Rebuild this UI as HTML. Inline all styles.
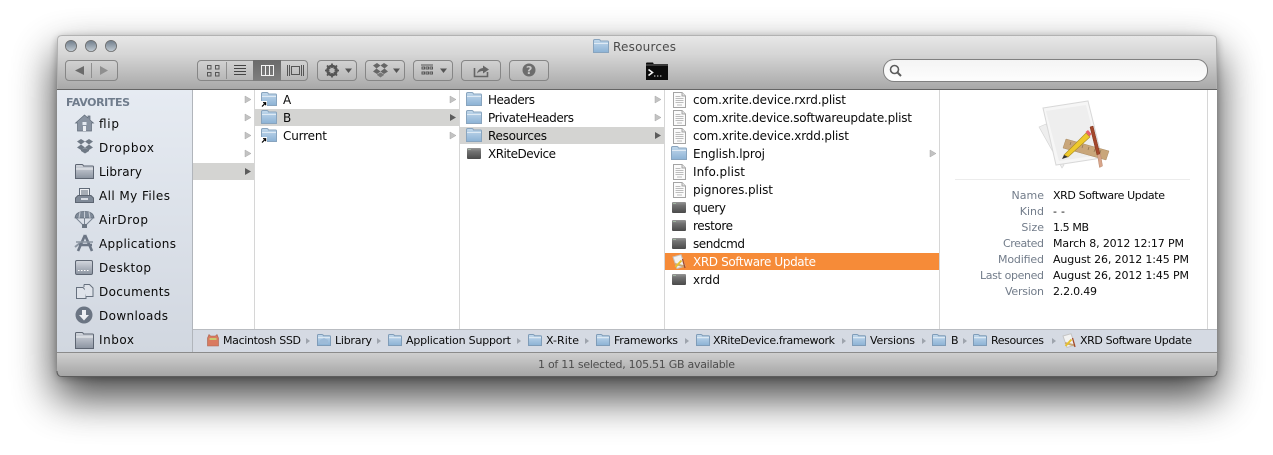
<!DOCTYPE html>
<html><head><meta charset="utf-8"><title>Resources</title>
<style>
html,body{margin:0;padding:0;width:1273px;height:455px;overflow:hidden;background:#fff}
svg{display:block}
text{font-family:"DejaVu Sans","Liberation Sans",sans-serif;font-size:12px;fill:#0a0a0a}
.s{font-size:11px}
.l{font-size:11px;fill:#727c8a}
</style></head><body>
<svg width="1273" height="455" viewBox="0 0 1273 455" xmlns="http://www.w3.org/2000/svg">
<defs>
<filter id="sh" x="-10%" y="-30%" width="120%" height="170%"><feGaussianBlur stdDeviation="21"/></filter>
<filter id="sh2" x="-5%" y="-10%" width="110%" height="120%"><feGaussianBlur stdDeviation="4"/></filter>
<linearGradient id="tb" x1="0" y1="0" x2="0" y2="1"><stop offset="0" stop-color="#e8e8e8"/><stop offset=".35" stop-color="#d6d6d6"/><stop offset="1" stop-color="#a7a7a7"/></linearGradient>
<linearGradient id="st" x1="0" y1="0" x2="0" y2="1"><stop offset="0" stop-color="#cfcfcf"/><stop offset="1" stop-color="#a5a5a5"/></linearGradient>
<linearGradient id="sb" x1="0" y1="0" x2="0" y2="1"><stop offset="0" stop-color="#e6ebf2"/><stop offset="1" stop-color="#d1d7e0"/></linearGradient>
<linearGradient id="btn" x1="0" y1="0" x2="0" y2="1"><stop offset="0" stop-color="#d2d2d2"/><stop offset="1" stop-color="#b6b6b6"/></linearGradient>
<linearGradient id="sel" x1="0" y1="0" x2="0" y2="1"><stop offset="0" stop-color="#6a6a6a"/><stop offset="1" stop-color="#7e7e7e"/></linearGradient>
<linearGradient id="fo" x1="0" y1="0" x2="0" y2="1"><stop offset="0" stop-color="#c3d9ec"/><stop offset="1" stop-color="#8cb2d5"/></linearGradient>
<linearGradient id="gf" x1="0" y1="0" x2="0" y2="1"><stop offset="0" stop-color="#d4d8df"/><stop offset="1" stop-color="#8b93a0"/></linearGradient>
<linearGradient id="ex" x1="0" y1="0" x2="0" y2="1"><stop offset="0" stop-color="#969696"/><stop offset=".3" stop-color="#737373"/><stop offset="1" stop-color="#4a4a4a"/></linearGradient>
<linearGradient id="tl" x1="0" y1="0" x2="0" y2="1"><stop offset="0" stop-color="#6e7c8a"/><stop offset="1" stop-color="#c3ccd4"/></linearGradient>
<linearGradient id="sr" x1="0" y1="0" x2="0" y2="1"><stop offset="0" stop-color="#f4f4f4"/><stop offset="1" stop-color="#fdfdfd"/></linearGradient>

<g id="f"><path d="M.5 13.5V1.8Q.5.5 1.8.5H6Q7 .5 7.5 2H14.5Q15.5 2 15.5 3V13.5Z" fill="url(#fo)" stroke="#88a4be"/><path d="M1 4.5H15" stroke="#dfeaf4"/></g>
<g id="fs"><path d="M.5 11.5V1.6Q.5.5 1.5.5H5Q6 .5 6.5 1.7H12.5Q13.5 1.7 13.5 2.7V11.5Z" fill="url(#fo)" stroke="#7f9cb8"/><path d="M1 3.7H13" stroke="#e4eef6"/></g>
<g id="al"><rect x="0" y="0" width="6" height="6" fill="#fff"/><path d="M1 5.500L4.200 2.300M2 1.700H4.600V4.300" stroke="#000" stroke-width="1.200" fill="none"/></g>
<g id="d"><path d="M.5.5H9L12.5 4V15.5H.5Z" fill="#fbfbfb" stroke="#a4a4a4"/><path d="M9 .5V4H12.5" fill="#e4e4e4" stroke="#a4a4a4"/><path d="M2.500 4.500H7.500M2.500 6.500H10.500M2.500 8.500H10.500M2.500 10.500H10.500M4 13H9" stroke="#bcbcbc"/></g>
<g id="e"><rect x="0" y="0" width="14" height="11" rx="1" fill="url(#ex)"/><rect x="1" y="1" width="3" height="1" fill="#9fb49f"/></g>
<g id="app"><path d="M1 3L9 .7 13 12 5 14.500Z" fill="#f2f2f2" stroke="#c4c4c4"/><path d="M3 10L13 12.500" stroke="#c9a878" stroke-width="2"/><path d="M3.500 13L9.500 6.500" stroke="#e7c22e" stroke-width="2"/><path d="M10.500 5L13 14" stroke="#a3492a" stroke-width="1.300"/></g>
<path id="a" d="M0 0L6 3.500L0 7Z" fill="#c3c3c3" stroke="#a9a9a9" stroke-width=".5"/>
<path id="ad" d="M0 0L6 3.500L0 7Z" fill="#5c5c5c"/>
<path id="p" d="M0 0L4 3L0 6Z" fill="#9ea4ad"/>
</defs>

<!-- shadow -->
<rect x="55" y="54" width="1164" height="344" rx="8" fill="#000" opacity=".72" filter="url(#sh)"/>
<rect x="57" y="37" width="1160" height="341" rx="6" fill="#000" opacity=".28" filter="url(#sh2)"/>

<!-- window -->
<rect x="57" y="35" width="1160" height="342" rx="5" fill="#fff"/>
<path d="M57 90V40Q57 35 62 35H1212Q1217 35 1217 40V90Z" fill="url(#tb)"/>
<path d="M57.500 90V40Q57.500 35.500 62 35.500H1212Q1216.500 35.500 1216.500 40V90" fill="none" stroke="#b2b2b2"/>
<rect x="57" y="89" width="1160" height="1" fill="#656565"/>

<!-- sidebar -->
<rect x="57" y="90" width="135" height="262" fill="url(#sb)"/>
<rect x="192" y="90" width="1" height="262" fill="#b1b5bb"/>

<!-- columns -->
<rect x="193" y="163" width="61" height="17" fill="#d4d4d2"/>
<rect x="255" y="109" width="204" height="17" fill="#d4d4d2"/>
<rect x="460" y="127" width="204" height="17" fill="#d4d4d2"/>
<rect x="665" y="253" width="274" height="17" fill="#f68b38"/>
<rect x="254" y="90" width="1" height="240" fill="#d6d6d6"/>
<rect x="459" y="90" width="1" height="240" fill="#d6d6d6"/>
<rect x="664" y="90" width="1" height="240" fill="#d6d6d6"/>
<rect x="939" y="90" width="1" height="240" fill="#d6d6d6"/>
<rect x="1207" y="90" width="1" height="240" fill="#d6d6d6"/>

<!-- path bar -->
<rect x="193" y="330" width="1024" height="22" fill="#d5dae3"/>
<rect x="193" y="329" width="1024" height="1" fill="#b9bcc1"/>
<!-- status -->
<path d="M57 353H1217V371Q1217 376 1212 376H62Q57 376 57 371Z" fill="url(#st)"/>
<rect x="57" y="352" width="1160" height="1" fill="#8b8b8b"/>
<path d="M57 371Q57 376.500 62 376.500H1212Q1217 376.500 1217 371" fill="none" stroke="#5c5c5c"/>

<!-- traffic lights -->
<g stroke="#6d6d6d" stroke-width=".8" fill="url(#tl)"><circle cx="71" cy="46" r="5.600"/><circle cx="91" cy="46" r="5.600"/><circle cx="111" cy="46" r="5.600"/></g>

<!-- title -->
<use href="#f" x="593" y="39"/>
<text x="613" y="51" textLength="63" style="fill:#4a4a4a">Resources</text>

<!-- toolbar buttons -->
<g fill="url(#btn)" stroke="#868686">
<rect x="65.500" y="60.500" width="52" height="20" rx="3.500"/>
<rect x="197.500" y="60.500" width="110" height="20" rx="3.500"/>
<rect x="317.500" y="60.500" width="39" height="20" rx="3.500"/>
<rect x="365.500" y="60.500" width="39" height="20" rx="3.500"/>
<rect x="413.500" y="60.500" width="39" height="20" rx="3.500"/>
<rect x="461.500" y="60.500" width="39" height="20" rx="3.500"/>
<rect x="509.500" y="60.500" width="39" height="20" rx="3.500"/>
</g>
<rect x="253" y="60" width="28" height="21" fill="url(#sel)"/>
<rect x="91" y="63" width="1" height="15" fill="#8f8f8f"/>
<rect x="226" y="62" width="1" height="17" fill="#8f8f8f"/>
<path d="M84 66L75 70.500L84 75Z" fill="#6b6b6b"/>
<path d="M100 66L108 70.500L100 75Z" fill="#8f8f8f"/>
<!-- icon view -->
<g fill="none" stroke="#555"><rect x="207.500" y="65.500" width="3.500" height="3.500"/><rect x="215.500" y="65.500" width="3.500" height="3.500"/><rect x="207.500" y="72.500" width="3.500" height="3.500"/><rect x="215.500" y="72.500" width="3.500" height="3.500"/></g>
<path d="M234 65.500H246M234 68.500H246M234 71.500H246M234 74.500H246" stroke="#444"/>
<g fill="none" stroke="#f3f3f3"><rect x="261.500" y="65.500" width="12" height="10"/><path d="M265.500 65.500V75.500M269.500 65.500V75.500"/></g>
<path d="M287.500 65V76M289.500 65V76M301.500 65V76M303.500 65V76" stroke="#555"/><rect x="291.500" y="66.500" width="8" height="8" fill="none" stroke="#555"/>
<!-- gear -->
<g transform="translate(332 70.500)"><circle r="4.600" fill="none" stroke="#555" stroke-width="2.400"/><path d="M0-7V7M-7 0H7M-5-5L5 5M-5 5L5-5" stroke="#555" stroke-width="1.800"/><circle r="2.600" fill="#bdbdbd"/></g>
<path d="M345 68.500H352L348.500 73Z" fill="#555"/>
<!-- dropbox -->
<path d="M373 65.500L377 63 380.500 65.500 384 63 388 65.500 384.500 68.500 388 71.500 384 74 380.500 71.500 377 74 373 71.500 376.500 68.500 380.500 71.500 384.500 68.500 380.500 65.500 376.500 68.500Z" fill="#666"/>
<path d="M377 75L380.500 77.500 384 75V74.500L380.500 72.500 377 74.500Z" fill="#777"/>
<path d="M393 68.500H400L396.500 73Z" fill="#555"/>
<!-- arrange -->
<path d="M421 65H433" stroke="#555"/><g fill="none" stroke="#555"><rect x="422" y="67" width="2.500" height="2"/><rect x="426" y="67" width="2.500" height="2"/><rect x="430" y="67" width="2.500" height="2"/><rect x="422" y="72" width="2.500" height="2"/><rect x="426" y="72" width="2.500" height="2"/><rect x="430" y="72" width="2.500" height="2"/></g>
<path d="M440 68.500H447L443.500 73Z" fill="#555"/>
<!-- share -->
<path d="M474.500 68V76.500H487.500V72" fill="none" stroke="#666" stroke-width="1.600"/>
<path d="M477 73.500Q478 68.500 483 68V65.500L489 69.500 483 73.500V71Q479.500 71 477 73.500Z" fill="#666"/>
<!-- help -->
<circle cx="529" cy="70" r="6.500" fill="#6d6d6d"/><text x="526" y="74" style="font-size:11px;font-weight:bold;fill:#c9c9c9">?</text>
<!-- terminal -->
<path d="M646 63.500Q646 62.500 647 62.500H653L654 64.500H668V80H646Z" fill="#0c0c0c"/><rect x="646" y="64" width="22" height="2" fill="#3a3a3a"/>
<path d="M648.500 69.500L652.500 72.500 648.500 75.500" fill="none" stroke="#f2f2f2" stroke-width="1.600"/>
<path d="M654 76H655.400M657 76H658.400M660 76H661.400" stroke="#e8e8e8"/>
<!-- search -->
<rect x="883.500" y="59.500" width="324" height="22" rx="10.500" fill="url(#sr)" stroke="#808080"/>
<circle cx="894.500" cy="69.500" r="4" fill="none" stroke="#5d5d5d" stroke-width="1.600"/><path d="M897.500 72.500L901 76" stroke="#5d5d5d" stroke-width="2"/>

<!-- sidebar content -->
<text x="66" y="106" textLength="64" style="font-size:11px;font-weight:bold;fill:#6f7c8c">FAVORITES</text>
<g>
<text x="99" y="128" textLength="20">flip</text>
<text x="99" y="152" textLength="55">Dropbox</text>
<text x="99" y="176" textLength="43">Library</text>
<text x="99" y="200" textLength="71">All My Files</text>
<text x="99" y="224" textLength="49">AirDrop</text>
<text x="99" y="248" textLength="77">Applications</text>
<text x="99" y="272" textLength="52">Desktop</text>
<text x="99" y="296" textLength="71">Documents</text>
<text x="99" y="320" textLength="69">Downloads</text>
<text x="99" y="344" textLength="35">Inbox</text>
</g>
<!-- house -->
<path d="M84.500 115L75.500 123H77.500V131H91.500V123H93.500L90 120V116H88V118Z" fill="#8a94a2" stroke="#5f6a78" stroke-width=".7"/>
<rect x="82.500" y="122" width="4" height="3" fill="#e6ebf2"/><rect x="83" y="126" width="3" height="5" fill="#eef1f5"/>
<!-- dropbox -->
<path d="M77 141.500L81 139 85 141.500 89 139 93 141.500 89 144.500 93 147.500 89 150 85 147.500 81 150 77 147.500 81 144.500 85 147.500 89 144.500 85 141.500 81 144.500Z" fill="#6f7985"/>
<path d="M81 151L85 153.500 89 151V149.800L85 148 81 149.800Z" fill="#6f7985"/>
<!-- library -->
<path d="M75.500 178.500V165.500Q75.500 164.500 76.500 164.500H82Q83 164.500 83.500 166H92.500Q93.500 166 93.500 167V178.500Z" fill="url(#gf)" stroke="#5d6572"/>
<path d="M76 169H93" stroke="#eef0f3"/>
<!-- all my files -->
<rect x="79.500" y="188.500" width="10" height="9" fill="#eef0f4" stroke="#5f6a78"/><path d="M81 191H88M81 193H88M81 195H88" stroke="#5f6a78"/>
<path d="M75.500 198L78 195.500H91L93.500 198V202.500H75.500Z" fill="#7f8997" stroke="#5d6572"/>
<path d="M81 198H88V200H81Z" fill="#d7dce4"/>
<!-- airdrop -->
<path d="M75 218Q75.500 211.500 84.500 211.500T94 218Z" fill="#7f8a98" stroke="#5f6a78" stroke-width=".7"/>
<path d="M80 212L79 218M84.500 211.500V218M89 212L90 218" stroke="#c6ccd5"/>
<path d="M76 218L83 225M93 218L86 225M84.500 218V225" stroke="#7c8694"/><rect x="82" y="224" width="5" height="4" fill="#6c7683"/>
<!-- applications -->
<path d="M75 247L80 243" stroke="#8b95a2" stroke-width="2"/>
<path d="M85 235L78 251M85 235L92 251M79 245H92" stroke="#6c7685" stroke-width="2.600" fill="none"/>
<path d="M76 242H93" stroke="#8b95a2" stroke-width="1.400"/>
<!-- desktop -->
<rect x="75.500" y="260.500" width="17" height="14" rx="1.500" fill="url(#gf)" stroke="#5e6673"/><path d="M78 270.500H90" stroke="#fff" stroke-dasharray="1.500 1.500"/>
<!-- documents -->
<path d="M76.500 287.500H83L86 290.500V298.500H76.500Z" fill="#dfe3ea" stroke="#66707e"/>
<path d="M84 284.500H89.500L93 288V296.500H86" fill="#dfe3ea" stroke="#66707e"/><path d="M84 284.500V287" stroke="#66707e"/>
<!-- downloads -->
<circle cx="84" cy="315" r="8.500" fill="#6b7583"/><path d="M82 310H86V315H89L84 320.500 79 315H82Z" fill="#eef0f3"/>
<!-- inbox -->
<path d="M75.500 348.500V333.500Q75.500 332.500 76.500 332.500H82Q83 332.500 83.500 334H92.500Q93.500 334 93.500 335V348.500Z" fill="url(#gf)" stroke="#5d6572"/>
<path d="M76 337H93" stroke="#eef0f3"/>

<!-- col1 arrows -->
<use href="#a" x="245" y="96"/><use href="#a" x="245" y="114"/><use href="#a" x="245" y="132"/><use href="#a" x="245" y="150"/><use href="#ad" x="245" y="168"/>

<!-- col2 -->
<use href="#f" x="261" y="92"/><use href="#al" x="261" y="101"/>
<use href="#f" x="261" y="110"/>
<use href="#f" x="261" y="128"/><use href="#al" x="261" y="137"/>
<text x="283" y="104" textLength="9">A</text>
<text x="283" y="122" textLength="8">B</text>
<text x="283" y="140" textLength="44">Current</text>
<use href="#a" x="450" y="96"/><use href="#ad" x="450" y="114"/><use href="#a" x="450" y="132"/>

<!-- col3 -->
<use href="#f" x="466" y="92"/><use href="#f" x="466" y="110"/><use href="#f" x="466" y="128"/>
<use href="#e" x="467" y="148"/>
<text x="488" y="104" textLength="47">Headers</text>
<text x="488" y="122" textLength="86">PrivateHeaders</text>
<text x="488" y="140" textLength="59">Resources</text>
<text x="488" y="158" textLength="68">XRiteDevice</text>
<use href="#a" x="655" y="96"/><use href="#a" x="655" y="114"/><use href="#ad" x="655" y="132"/>

<!-- col4 -->
<use href="#d" x="673" y="92"/><use href="#d" x="673" y="110"/><use href="#d" x="673" y="128"/>
<use href="#f" x="671" y="146"/>
<use href="#d" x="673" y="164"/><use href="#d" x="673" y="182"/>
<use href="#e" x="672" y="202"/><use href="#e" x="672" y="220"/><use href="#e" x="672" y="238"/><use href="#e" x="672" y="274"/>
<use href="#app" x="672" y="254"/>
<text x="693" y="104" textLength="153">com.xrite.device.rxrd.plist</text>
<text x="693" y="122" textLength="219">com.xrite.device.softwareupdate.plist</text>
<text x="693" y="140" textLength="156">com.xrite.device.xrdd.plist</text>
<text x="693" y="158" textLength="72">English.lproj</text>
<text x="693" y="176" textLength="52">Info.plist</text>
<text x="693" y="194" textLength="80">pignores.plist</text>
<text x="693" y="212" textLength="33">query</text>
<text x="693" y="230" textLength="40">restore</text>
<text x="693" y="248" textLength="52">sendcmd</text>
<text x="693" y="266" textLength="123" style="fill:#fff">XRD Software Update</text>
<text x="693" y="284" textLength="27">xrdd</text>
<use href="#a" x="930" y="150"/>

<!-- preview -->
<path d="M1039 127L1046 124 1064 165 1062 168Z" fill="#eee" stroke="#d2d2d2" stroke-width=".6"/>
<path d="M1043 108L1088 101 1102 158 1056 165Z" fill="#f6f6f6" stroke="#d8d8d8"/>
<path d="M1046 111L1086 105 1099 155 1059 161Z" fill="#eeeeee"/>
<path d="M1066 139L1109 151 1106 160 1063 148Z" fill="#c9a67a" stroke="#a88a62" stroke-width=".5"/>
<path d="M1070 145L1071 142M1076 147L1077 144M1082 148L1083 145M1088 150L1089 147M1094 152L1095 149M1100 153L1101 150" stroke="#8e7350" stroke-width=".7"/>
<path d="M1064 155L1086 133 1090 137 1068 157Z" fill="#eec92c" stroke="#a88a22" stroke-width=".6"/>
<path d="M1064 155L1068 157 1062 159Z" fill="#333"/>
<path d="M1085.500 132L1088 130 1091.500 134 1089.500 136.500Z" fill="#e8606a"/>
<path d="M1090 127L1093 126 1100 154 1097 155Z" fill="#a3472b" stroke="#7d321c" stroke-width=".5"/>
<path d="M1097.500 155L1100.500 154 1102.500 166 1099.500 167.500Z" fill="#d8a58a" stroke="#b98a6f" stroke-width=".5"/>
<rect x="955" y="179" width="235" height="1" fill="#ececec"/>

<g text-anchor="end">
<text class="l" x="1044" y="199">Name</text>
<text class="l" x="1044" y="215">Kind</text>
<text class="l" x="1044" y="231">Size</text>
<text class="l" x="1044" y="247" textLength="41">Created</text>
<text class="l" x="1044" y="263" textLength="46">Modified</text>
<text class="l" x="1044" y="279" textLength="64">Last opened</text>
<text class="l" x="1044" y="295" textLength="39">Version</text>
</g>
<g>
<text class="s" x="1053" y="199" textLength="112">XRD Software Update</text>
<text class="s" x="1053" y="215" textLength="12">--</text>
<text class="s" x="1053" y="231" textLength="36">1.5 MB</text>
<text class="s" x="1053" y="247" textLength="131">March 8, 2012 12:17 PM</text>
<text class="s" x="1053" y="263" textLength="136">August 26, 2012 1:45 PM</text>
<text class="s" x="1053" y="279" textLength="136">August 26, 2012 1:45 PM</text>
<text class="s" x="1053" y="295" textLength="44">2.2.0.49</text>
</g>

<!-- path bar content -->
<path d="M207.500 346V338L209 334.500 210.500 336H215.500L217 334.500 218.500 338V346Z" fill="#d97a60" stroke="#a9644e" stroke-width=".6"/>
<rect x="209.500" y="338" width="7" height="2" fill="#c8cb70"/>
<g>
<text class="s" x="223" y="344" textLength="78">Macintosh SSD</text>
<use href="#p" x="306" y="338"/>
<use href="#fs" x="317" y="334"/><path d="M320 344V340L324 338 328 340V344Z" fill="#9dbbd8"/>
<text class="s" x="335" y="344" textLength="37">Library</text>
<use href="#p" x="377" y="338"/>
<use href="#fs" x="388" y="334"/>
<text class="s" x="406" y="344" textLength="105">Application Support</text>
<use href="#p" x="517" y="338"/>
<use href="#fs" x="528" y="334"/>
<text class="s" x="546" y="344" textLength="33">X-Rite</text>
<use href="#p" x="585" y="338"/>
<use href="#fs" x="596" y="334"/>
<text class="s" x="614" y="344" textLength="64">Frameworks</text>
<use href="#p" x="685" y="338"/>
<use href="#fs" x="696" y="334"/>
<text class="s" x="713" y="344" textLength="122">XRiteDevice.framework</text>
<use href="#p" x="842" y="338"/>
<use href="#fs" x="852" y="334"/>
<text class="s" x="870" y="344" textLength="45">Versions</text>
<use href="#p" x="922" y="338"/>
<use href="#fs" x="932" y="334"/>
<text class="s" x="951" y="344" textLength="6">B</text>
<use href="#p" x="963" y="338"/>
<use href="#fs" x="973" y="334"/>
<text class="s" x="991" y="344" textLength="53">Resources</text>
<use href="#p" x="1052" y="338"/>
<use href="#app" x="1062" y="333"/>
<text class="s" x="1080" y="344" textLength="112">XRD Software Update</text>
</g>

<!-- status -->
<text x="538" y="368" textLength="197" style="font-size:11px;fill:#4d4d4d">1 of 11 selected, 105.51 GB available</text>
</svg>
</body></html>
